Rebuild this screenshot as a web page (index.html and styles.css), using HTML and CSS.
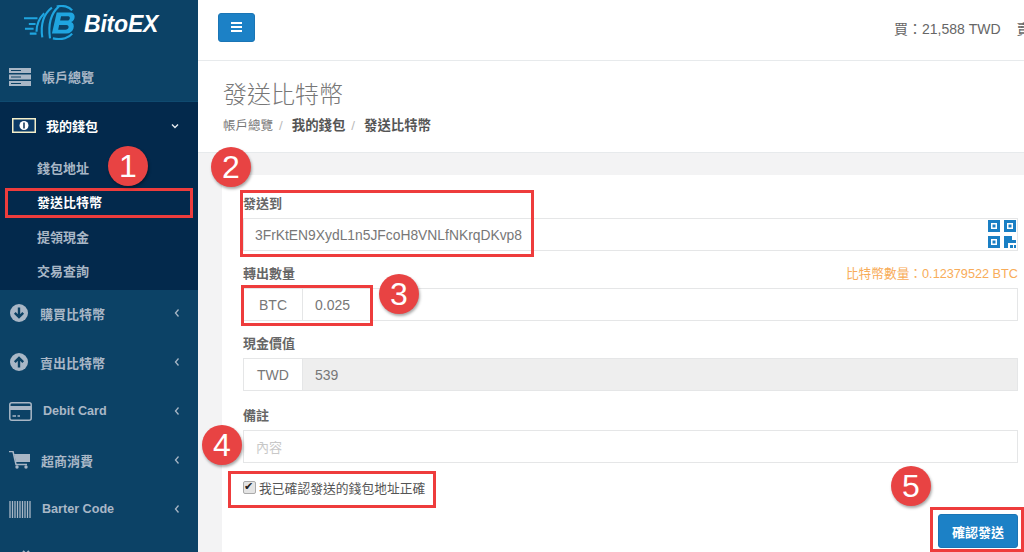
FILE: index.html
```html
<!DOCTYPE html>
<html lang="zh-Hant">
<head>
<meta charset="utf-8">
<title>BitoEX</title>
<link rel="stylesheet" href="styles.css">
</head>
<body>
<div class="app">
  <aside class="sidebar">
    <div class="logo">
      <svg class="logo-mark" width="52" height="36" viewBox="0 0 54 36">
        <g fill="none" stroke="#1fa5e0" stroke-width="2.200">
          <path d="M29 2 C21 8 17 19 19 33"/>
          <path d="M36 1 C28 8 25 20 27 34"/>
          <path d="M21 8 C16 13 13 19 13 27"/>
          <path d="M0 13 H14 M5 19 H12 M1 24 H10 M6 29 H13"/>
          <path d="M30 34 C40 36 47 33 50 29"/>
          <path d="M34 1 C40 -1 47 1 50 5"/>
        </g>
        <path d="M34 7 H48 C54 7 54 15 49 17 C54 19 52 29 44 29 H29 Z M38.500 11 L37.500 15.500 H45 C48 15.500 48.500 11 46 11 Z M36.500 20 L35.500 25 H43 C47 25 47.500 20 44 20 Z" fill="#1fa5e0" fill-rule="evenodd"/>
      </svg>
      <span class="logo-text">BitoEX</span>
    </div>
    <nav class="menu">
      <a class="item first">
        <svg class="ico" width="22" height="18" viewBox="0 0 22 18"><path d="M0 0H22V5H0ZM0 6.500H22V11.500H0ZM0 13H22V18H0Z" fill="#a9b7c6"/><path d="M2 2.500H12M2 9H12M2 15.500H12" stroke="#0d4264"/></svg>
        <span class="label">帳戶總覽</span>
      </a>
      <div class="group">
        <a class="item head">
          <svg class="ico" width="24" height="15" viewBox="0 0 24 15"><rect width="24" height="15" fill="#f4eec9"/><rect x="1.500" y="1.500" width="21" height="12" fill="#0b3a66"/><circle cx="12" cy="7.500" r="4.500" fill="#fff"/><path d="M12 4.500V10.500" stroke="#0b2f52" stroke-width="1.500"/></svg>
          <span class="label strong">我的錢包</span>
          <svg class="chev" width="8" height="8" viewBox="0 0 8 8"><path d="M1 2.500L4 5.500L7 2.500" fill="none" stroke="#e5ebf0" stroke-width="1.400"/></svg>
        </a>
        <a class="sub">錢包地址</a>
        <a class="sub on">發送比特幣</a>
        <a class="sub">提領現金</a>
        <a class="sub">交易查詢</a>
      </div>
      <a class="item">
        <svg class="ico" width="20" height="20" viewBox="0 0 20 20"><circle cx="10" cy="10" r="9" fill="#a9b7c6"/><path d="M10 4.500V14M5.800 9.800L10 14L14.200 9.800" fill="none" stroke="#0d4264" stroke-width="2.400"/></svg>
        <span class="label">購買比特幣</span>
        <svg class="chev" width="8" height="10" viewBox="0 0 8 10"><path d="M5.500 1.500L2.500 5L5.500 8.500" fill="none" stroke="#a9b7c6" stroke-width="1.300"/></svg>
      </a>
      <a class="item">
        <svg class="ico" width="20" height="20" viewBox="0 0 20 20"><circle cx="10" cy="10" r="9" fill="#a9b7c6"/><path d="M10 15.500V6M5.800 10.200L10 6L14.200 10.200" fill="none" stroke="#0d4264" stroke-width="2.400"/></svg>
        <span class="label">賣出比特幣</span>
        <svg class="chev" width="8" height="10" viewBox="0 0 8 10"><path d="M5.500 1.500L2.500 5L5.500 8.500" fill="none" stroke="#a9b7c6" stroke-width="1.300"/></svg>
      </a>
      <a class="item">
        <svg class="ico" width="23" height="19" viewBox="0 0 23 19"><rect x="0.800" y="0.800" width="21.400" height="17.400" rx="2" fill="none" stroke="#a9b7c6" stroke-width="1.500"/><rect x="1" y="4" width="21" height="4" fill="#a9b7c6"/><path d="M3.500 14H7M8.500 14H11" stroke="#a9b7c6" stroke-width="1.500"/></svg>
        <span class="label latin">Debit Card</span>
        <svg class="chev" width="8" height="10" viewBox="0 0 8 10"><path d="M5.500 1.500L2.500 5L5.500 8.500" fill="none" stroke="#a9b7c6" stroke-width="1.300"/></svg>
      </a>
      <a class="item">
        <svg class="ico" width="21" height="18" viewBox="0 0 21 18"><path d="M0 0.500H4L7 13.500H18" fill="none" stroke="#a9b7c6" stroke-width="1.500"/><path d="M5 3H21V11H7Z" fill="#a9b7c6"/><circle cx="8" cy="16" r="1.700" fill="#a9b7c6"/><circle cx="17" cy="16" r="1.700" fill="#a9b7c6"/></svg>
        <span class="label">超商消費</span>
        <svg class="chev" width="8" height="10" viewBox="0 0 8 10"><path d="M5.500 1.500L2.500 5L5.500 8.500" fill="none" stroke="#a9b7c6" stroke-width="1.300"/></svg>
      </a>
      <a class="item">
        <svg class="ico" width="22" height="17" viewBox="0 0 22 17"><path d="M1 0V17M3.500 0V17M6 0V17M8.500 0V17M11 0V17M13.500 0V17M16 0V17M18.500 0V17M21 0V17" stroke="#a9b7c6" stroke-width="1.300"/></svg>
        <span class="label latin">Barter Code</span>
        <svg class="chev" width="8" height="10" viewBox="0 0 8 10"><path d="M5.500 1.500L2.500 5L5.500 8.500" fill="none" stroke="#a9b7c6" stroke-width="1.300"/></svg>
      </a>
      <a class="item">
        <svg class="ico" width="22" height="17" viewBox="0 0 22 17"><path d="M14 1L17 4L20 1" fill="none" stroke="#a9b7c6" stroke-width="2"/></svg>
      </a>
    </nav>
  </aside>
  <main class="main">
    <header class="topbar">
      <button class="burger" type="button" aria-label="menu"><span></span><span></span><span></span></button>
      <div class="rates"><span>買：21,588 TWD</span><span>賣</span></div>
    </header>
    <section class="page-head">
      <h1>發送比特幣</h1>
      <div class="crumbs"><span class="home">帳戶總覽</span><i>/</i><b>我的錢包</b><i>/</i><b>發送比特幣</b></div>
    </section>
    <section class="content">
      <form class="card">
        <div class="field">
          <div class="lab">發送到</div>
          <div class="box addr">3FrKtEN9XydL1n5JFcoH8VNLfNKrqDKvp8
            <svg class="qr" width="28" height="28" viewBox="0 0 28 28"><g fill="#1a7fc4" fill-rule="evenodd"><path d="M0 0H12V12H0ZM3 3V9H9V3Z"/><path d="M16 0H28V12H16ZM19 3V9H25V3Z"/><path d="M0 16H12V28H0ZM3 19V25H9V19Z"/><path d="M4.500 4.500H7.500V7.500H4.500ZM20.500 4.500H23.500V7.500H20.500ZM4.500 20.500H7.500V23.500H4.500Z"/><path d="M16 16H24V20H28V23H20V28H16ZM22 25H25V28H22ZM26 25H28V28H26Z"/></g></svg>
          </div>
        </div>
        <div class="field">
          <div class="lab split"><span>轉出數量</span><span class="bal">比特幣數量：0.12379522 BTC</span></div>
          <div class="box group-in"><span class="unit">BTC</span><span class="val">0.025</span></div>
        </div>
        <div class="field">
          <div class="lab">現金價值</div>
          <div class="box group-in"><span class="unit">TWD</span><span class="val off">539</span></div>
        </div>
        <div class="field note">
          <div class="lab">備註</div>
          <div class="box hint">內容</div>
        </div>
        <label class="agree"><input type="checkbox" checked>我已確認發送的錢包地址正確</label>
        <div class="actions"><button class="send" type="button">確認發送</button></div>
      </form>
    </section>
  </main>
  <div class="mark" style="left:5px;top:188px;width:188px;height:30px"></div>
  <div class="mark" style="left:240px;top:190px;width:294px;height:67px"></div>
  <div class="mark" style="left:241px;top:285px;width:132px;height:41px"></div>
  <div class="mark" style="left:228px;top:471px;width:208px;height:37px"></div>
  <div class="mark" style="left:930px;top:507px;width:94px;height:45px"></div>
  <div class="num" style="left:108px;top:146px">1</div>
  <div class="num" style="left:211px;top:147px">2</div>
  <div class="num" style="left:379px;top:274px">3</div>
  <div class="num" style="left:202px;top:425px">4</div>
  <div class="num" style="left:891px;top:466px">5</div>
</div>
</body>
</html>
```
FILE: styles.css
```css
* { box-sizing: border-box; }
html, body { margin: 0; height: 100%; overflow: hidden; }
body {
  font-family: "Liberation Sans", "Noto Sans CJK TC", sans-serif;
  font-size: 14px;
  color: #676a6c;
  background: #fff;
}
.app { position: relative; display: flex; width: 1024px; height: 552px; overflow: hidden; }

.sidebar { flex: 0 0 198px; background: #0c4266; overflow: hidden; }
.logo { display: flex; align-items: center; height: 52px; padding: 0 0 2px 24px; gap: 8px; }
.logo-text { font: italic 700 23px "Liberation Sans", sans-serif; color: #fff; margin-top: -1px; letter-spacing: -0.200px; }
.logo-mark { margin-top: -4px; }

.item { display: flex; align-items: center; height: 49px; padding: 0 17px 3px 9px; color: #a9b7c6; font-size: 13px; font-weight: 700; }
.item.first { height: 50px; padding-bottom: 0; border-bottom: 1px solid #0f4a70; }
.ico { flex: 0 0 auto; }
.label { margin-left: 11px; flex: 1; }
.latin { font-size: 12.6px; }
.chev { flex: 0 0 auto; }
.group { background: #03294c; height: 188px; }
.item.head { height: 50px; padding: 0 19px 3px 12px; color: #fff; }
.label.strong { margin-left: 10px; }
.sub { display: block; height: 34.300px; line-height: 34px; padding-left: 37px; color: #a9b7c6; font-size: 13px; font-weight: 700; }
.sub.on { color: #fff; }

.main { flex: 1; min-width: 0; display: flex; flex-direction: column; }
.topbar { flex: 0 0 61px; display: flex; align-items: center; justify-content: space-between; padding: 0 0 6px 20px; border-bottom: 1px solid #e7eaec; }
.burger { display: flex; flex-direction: column; justify-content: center; gap: 2px; width: 37px; height: 29px; padding: 0 12px; background: #1c81c6; border: 1px solid #1a75b5; border-radius: 3px; }
.burger span { display: block; height: 2px; background: #fff; }
.rates { display: flex; flex: 0 0 auto; gap: 16px; width: 130px; white-space: nowrap; font-size: 14px; color: #666; margin-top: 1px; }

.page-head { flex: 0 0 92px; padding: 17px 0 0 25px; border-bottom: 1px solid #e7eaec; }
h1 { margin: 0; font-size: 24px; font-weight: 300; line-height: 33px; color: #777; }
.crumbs { margin-top: 5px; font-size: 13.4px; line-height: 20px; color: #777; }
.home { font-size: 12.5px; }
.crumbs i { font-style: normal; color: #bbb; margin: 0 9px 0 6px; }
.crumbs b { color: #555; }

.content { flex: 1; min-height: 0; background: #f3f3f4; padding: 22px 0 0 24px; }
.card { height: 100%; background: #fff; padding: 18px 6px 0 21px; }
.field { margin-bottom: 12px; }
.field.note { margin-top: 14px; margin-bottom: 14px; }
.lab { height: 25px; font-size: 13px; font-weight: 700; line-height: 22px; color: #666; }
.split { display: flex; justify-content: space-between; }
.bal { font-weight: 400; font-size: 12.7px; color: #f8ac59; }
.box { display: flex; align-items: center; height: 33px; border: 1px solid #e5e6e7; font-size: 14px; color: #777; }
.addr { position: relative; padding-left: 11px; font-size: 13.85px; }
.qr { position: absolute; right: 1px; top: 1px; }
.unit { flex: 0 0 59px; height: 100%; display: flex; align-items: center; justify-content: center; border-right: 1px solid #e5e6e7; }
.val { flex: 1; height: 100%; display: flex; align-items: center; padding-left: 12px; }
.val.off { background: #eee; }
.hint { padding-left: 12px; color: #c8c8c8; font-size: 13px; }
.agree { display: flex; align-items: center; height: 20px; font-size: 12.8px; color: #555; }
.agree input { appearance: none; position: relative; width: 13px; height: 13px; margin: 0 3px 0 0; background: #e4e4e4; border: 1px solid #aaa; border-radius: 2px; }
.agree input::after { content: "✔"; position: absolute; left: 0; top: -2px; font: 11px/13px "DejaVu Sans", sans-serif; color: #222; }
.actions { display: flex; justify-content: flex-end; margin-top: 17px; }
.send { width: 80px; height: 34px; background: #1c81c6; border: 1px solid #1a75b5; border-radius: 3px; color: #fff; font: 700 13px "Liberation Sans", "Noto Sans CJK TC", sans-serif; }

.mark { position: absolute; border: 3px solid #ee3c3c; }
.num { position: absolute; width: 40px; height: 40px; border-radius: 50%; background: #e84343; box-shadow: 1px 2px 3px rgba(0,0,0,.35); color: #fff; font: 32px/40px "Liberation Sans", sans-serif; text-align: center; }
```
